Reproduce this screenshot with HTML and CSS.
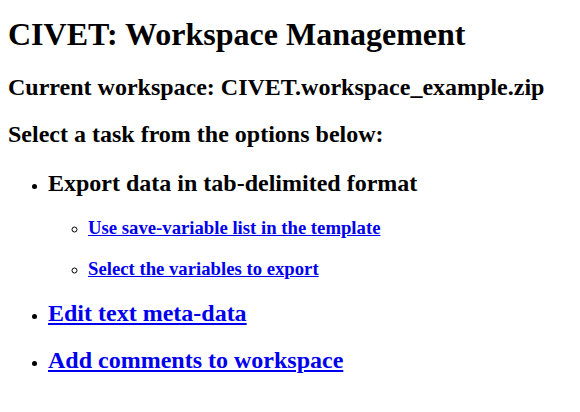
FILE: index.html
```html
<!DOCTYPE html>
<html>
<head>
<meta charset="utf-8">
<title>CIVET: Workspace Management</title>
<link rel="stylesheet" href="styles.css">
</head>
<body>
<h1 class="title">CIVET: Workspace Management</h1>
<h2>Current workspace: CIVET.workspace_example.zip</h2>
<h2>Select a task from the options below:</h2>
<ul class="tasks">
  <li>
    <h2>Export data in tab-delimited format</h2>
    <ul class="sub">
      <li><h3><a href="#">Use save-variable list in the template</a></h3></li>
      <li><h3><a href="#">Select the variables to export</a></h3></li>
    </ul>
  </li>
  <li><h2><a href="#">Edit text meta-data</a></h2></li>
  <li><h2><a href="#">Add comments to workspace</a></h2></li>
</ul>
</body>
</html>
```
FILE: styles.css
```css
body {
  margin: 0 8px 8px;
  font-family: "Liberation Serif", "Times New Roman", serif;
  color: #000;
  background: #fff;
}
a {
  color: #0000ee;
}
.title {
  margin-top: 16px;
}
.tasks {
  margin-top: 22px;
}
```
